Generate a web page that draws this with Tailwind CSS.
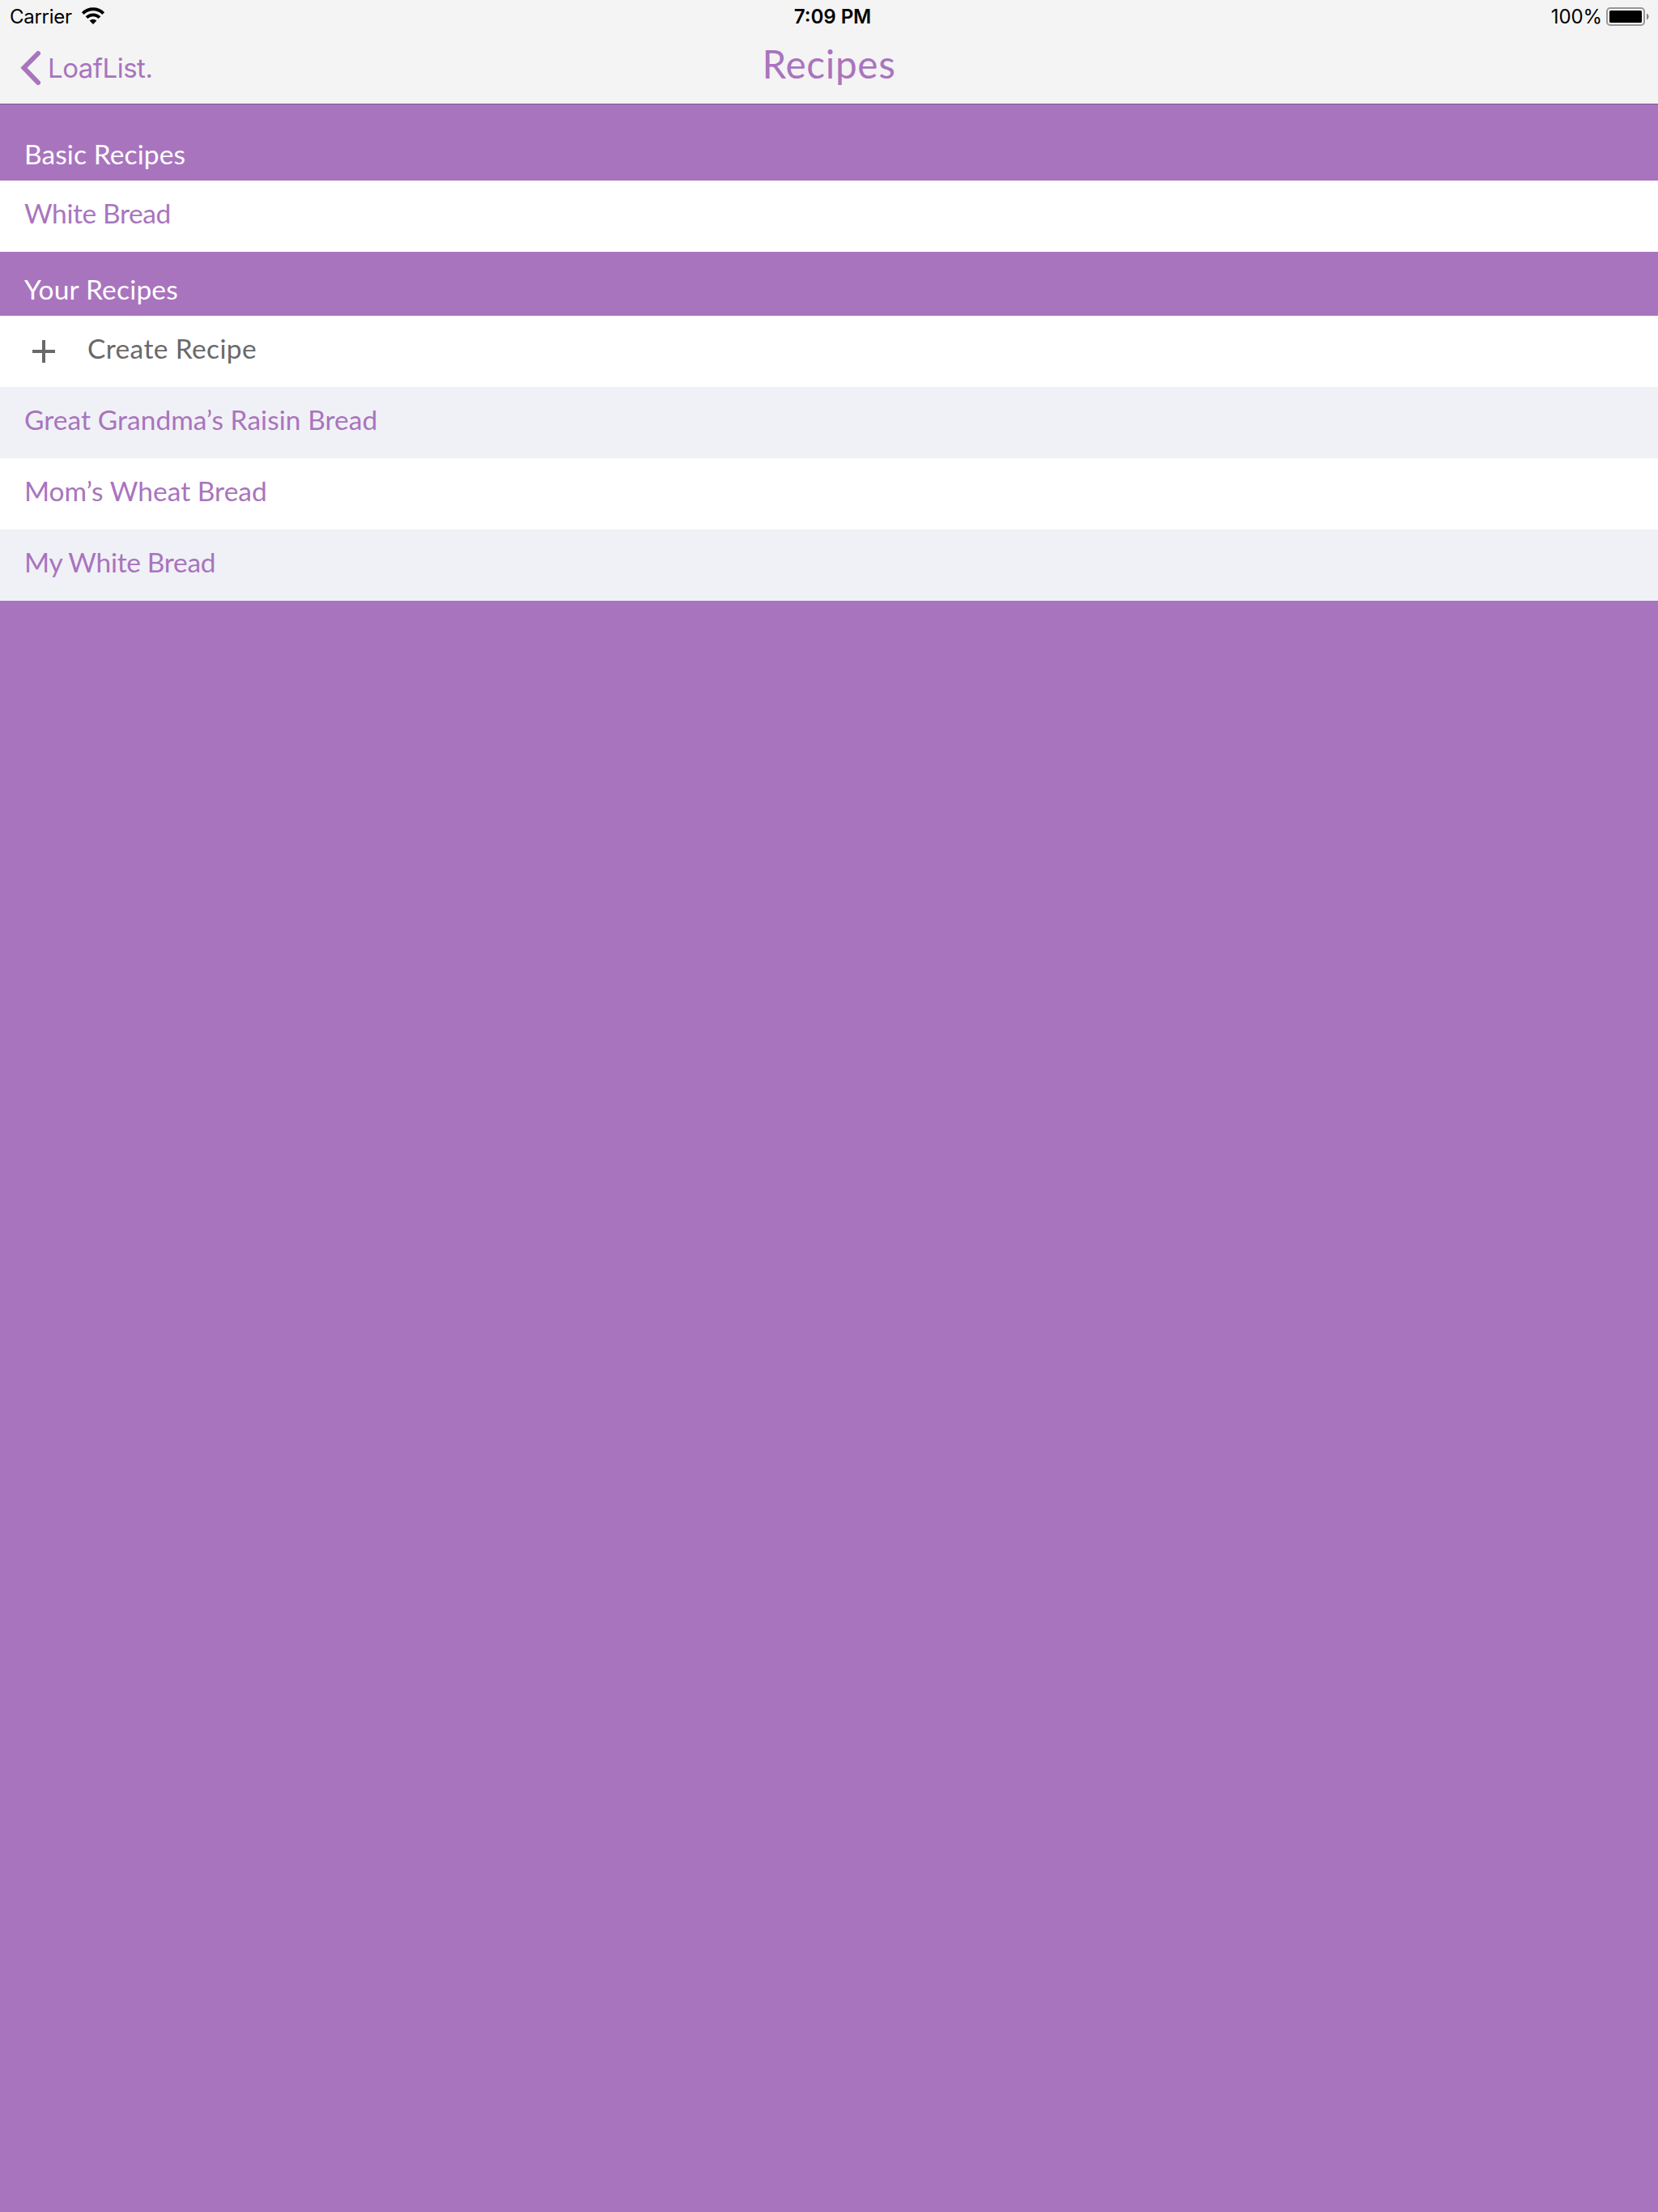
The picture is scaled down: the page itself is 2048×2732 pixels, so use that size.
<!DOCTYPE html>
<html class="m-0 h-full" lang="en">
  <head>
    <title>Recipes</title>
    <meta charset="UTF-8" />
    <script src="https://cdn.jsdelivr.net/npm/@tailwindcss/browser@4"></script>
  </head>

  <body class="m-0 min-h-full bg-[#a974be] font-[Lato,sans-serif] text-[33.5px]">
    <header class="bg-[#f4f4f4] h-[129px] border-b border-[#7b578b]">
      <!-- Status bar -->
      <div
        class="grid grid-cols-[1fr_auto_1fr] h-10 text-2xl/[42px] text-black font-[Inter,sans-serif]"
      >
        <div class="flex pl-3 tracking-[-0.27px]">
          <span>Carrier</span>
          <svg class="ml-[11px] mt-[9px] w-[30px] h-[22px]" viewBox="0 0 30 22">
            <path
              d="M2.3 7.6 A18 18 0 0 1 27.7 7.6"
              fill="none"
              stroke="#000"
              stroke-width="4"
            />
            <path
              d="M7 12.6 A11.3 11.3 0 0 1 23 12.6"
              fill="none"
              stroke="#000"
              stroke-width="3.8"
            />
            <path d="M10.6 16.6 A6.3 6.3 0 0 1 19.4 16.6 L15 21 Z" />
          </svg>
        </div>
        <span class="pl-[9px] font-semibold">7:09 PM</span>
        <div class="flex justify-end pr-[10px]">
          <span class="tracking-[-0.1px]">100%</span>
          <svg class="ml-1 mt-2 w-[55px] h-[25px]" viewBox="0 0 55 25">
            <rect
              x="2"
              y="2"
              width="46"
              height="21"
              rx="4"
              fill="none"
              stroke="#989898"
              stroke-width="2"
            />
            <rect x="5" y="5" width="40" height="15" rx="1.5" />
            <path d="M51 8.5 A4.4 4.4 0 0 1 51 16.5 Z" fill="#848484" />
          </svg>
        </div>
      </div>

      <!-- Nav bar -->
      <nav class="grid grid-cols-[1fr_auto_1fr] h-[88px] text-[#a974be]">
        <a class="flex pl-6 font-[Inter,sans-serif] text-[33px]/[88px] tracking-[-0.5px]">
          <svg class="mt-[21px] mr-[7px] w-7 h-[46px]" viewBox="0 0 28 46">
            <path
              d="M23 5 L5.5 22.7 L23 41"
              fill="none"
              stroke="currentColor"
              stroke-width="6"
              stroke-linecap="round"
            />
          </svg>
          <span>LoafList.</span>
        </a>
        <h1 class="text-[47.5px]/[78px] tracking-[0.75px]">Recipes</h1>
      </nav>
    </header>

    <main>
      <h2 class="flex items-end h-[94px] pl-[30px] pb-[13px] leading-10 tracking-[0.1px] text-white">
        Basic Recipes
      </h2>
      <ul class="leading-[80px] text-[#a974be]">
        <li class="h-[88px] pl-[30px] bg-white tracking-[-0.4px]">White Bread</li>
      </ul>

      <h2 class="flex items-end h-[79px] pl-[30px] pb-[13px] leading-10 tracking-[0.2px] text-white">
        Your Recipes
      </h2>
      <ul class="leading-[80px] text-[#a974be]">
        <li class="flex h-[88px] pl-10 bg-white text-[#696969] tracking-[0.37px]">
          <svg class="mt-[30px] mr-10 w-7 h-7" viewBox="0 0 28 28">
            <path d="M0 14 H28 M14 0 V28" stroke="currentColor" stroke-width="4" />
          </svg>
          Create Recipe
        </li>
        <li class="h-[88px] pl-[30px] bg-[#f0f1f6] tracking-[0.05px]">
          Great Grandma’s Raisin Bread
        </li>
        <li class="h-[88px] pl-[30px] bg-white tracking-[0.02px]">Mom’s Wheat Bread</li>
        <li class="h-[88px] pl-[30px] bg-[#f0f1f6] tracking-[-0.32px]">My White Bread</li>
      </ul>
    </main>
  </body>
</html>
